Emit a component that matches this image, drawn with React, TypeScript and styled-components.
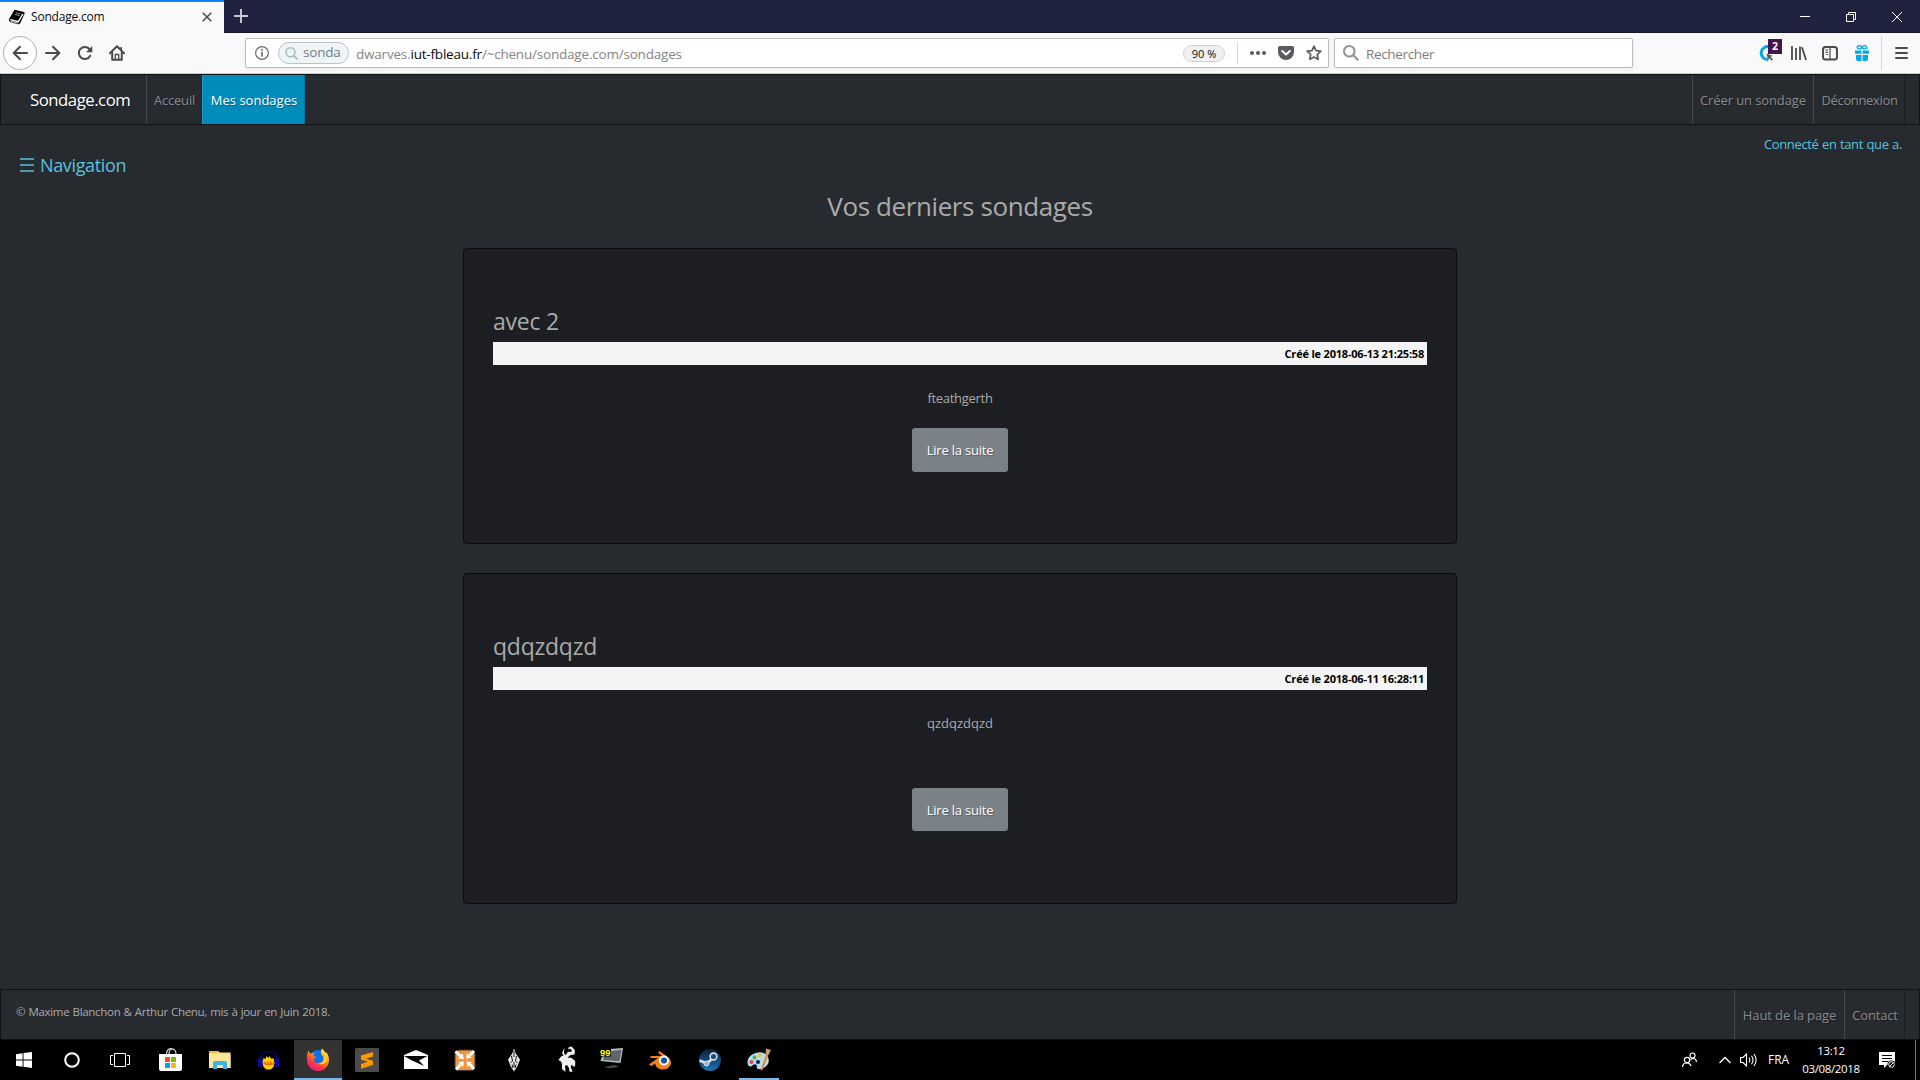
import React from "react";
import styled, { createGlobalStyle, css } from "styled-components";

const Global = createGlobalStyle`
  * { box-sizing: border-box; }
  html, body { margin: 0; padding: 0; background: #272b30; overflow: hidden; }
  svg { display: block; flex: none; }
`;

const Screen = styled.div`
  width: 1920px;
  height: 1080px;
  display: flex;
  flex-direction: column;
  font-family: "Open Sans", "Noto Sans", sans-serif;
  color: #aaa;
  white-space: nowrap;
  overflow: hidden;
`;

/* ---------- Browser window ---------- */

const TitleBar = styled.header`
  height: 33px;
  flex: none;
  display: flex;
  background: #20233f;
  box-shadow: inset 0 -1px 0 #13152a;
`;

const Tab = styled.div`
  width: 224px;
  height: 33px;
  display: flex;
  align-items: center;
  padding: 0 12px 1px 8px;
  border-top: 2px solid #0a84ff;
  background: #f9f9f9;
  color: #0c0c0d;
`;

const TabTitle = styled.span`
  flex: 1;
  margin: 0 0 1px 6px;
  font-size: 12px;
  line-height: 29px;
  letter-spacing: -0.2px;
`;

const NewTab = styled.div`
  display: flex;
  padding: 9px 0 0 10px;
`;

const WindowControls = styled.div`
  display: flex;
  gap: 36px;
  margin-left: auto;
  padding: 12px 18px 0 0;
`;

const Toolbar = styled.div`
  height: 41px;
  flex: none;
  display: flex;
  align-items: center;
  padding-left: 3px;
  background: #f9f9f9;
  border-bottom: 1px solid #ccc;
`;

const BackButton = styled.div`
  width: 34px;
  height: 34px;
  display: flex;
  align-items: center;
  justify-content: center;
  border: 1px solid #b1b1b1;
  border-radius: 50%;
  background: #fdfdfd;
`;

const ToolButtons = styled.div`
  display: flex;
  gap: 16px;
  margin-left: 8px;
`;

const Field = styled.div<{ $width: number }>`
  width: ${(p) => p.$width}px;
  height: 30px;
  display: flex;
  align-items: center;
  border: 1px solid #bcbcbc;
  border-radius: 2px;
  background: #fff;
  box-shadow: 0 1px 4px rgba(0, 0, 0, 0.06);
`;

const UrlField = styled(Field)`
  margin-left: 120px;
  padding: 0 6px 0 9px;
`;

const SearchField = styled(Field)`
  margin-left: 5px;
  padding-left: 8px;
`;

const SearchPill = styled.div`
  width: 71px;
  height: 22px;
  display: flex;
  align-items: center;
  gap: 5px;
  margin-left: 9px;
  padding-left: 6px;
  border: 1px solid #b8c6cc;
  border-radius: 11px;
  background: #f0f4f6;
  color: #6d7f87;
`;

const PillText = styled.span`
  margin-bottom: 2px;
  font-size: 13.5px;
  line-height: 18px;
  letter-spacing: -0.2px;
`;

const Url = styled.span`
  flex: 1;
  margin: 2px 0 0 7px;
  font-size: 13.5px;
  line-height: 20px;
  letter-spacing: -0.2px;
  color: #858585;
`;

const Host = styled.span`
  color: #0c0c0d;
`;

const ZoomPill = styled.div`
  width: 42px;
  height: 17px;
  border: 1px solid #d0d0d0;
  border-radius: 9px;
  background: #f0f0f0;
  color: #0c0c0d;
  font-size: 11px;
  line-height: 16px;
  text-align: center;
`;

const Rule = styled.i<{ $height: number; $before: number; $after?: number }>`
  width: 1px;
  height: ${(p) => p.$height}px;
  margin: 0 ${(p) => p.$after ?? 0}px 0 ${(p) => p.$before}px;
  background: #d7d7db;
`;

const UrlActions = styled.div`
  display: flex;
  gap: 12px;
  margin-left: 12px;
`;

const Placeholder = styled.span`
  margin: 2px 0 0 7px;
  font-size: 13.5px;
  line-height: 20px;
  letter-spacing: -0.35px;
  color: #7c7c7c;
`;

const Extensions = styled.div`
  display: flex;
  align-items: center;
  margin-left: auto;
  padding-right: 12px;
`;

const Counter = styled.div`
  position: relative;
  width: 24px;
  height: 16px;
  margin-right: 9px;
`;

const CounterBadge = styled.b`
  position: absolute;
  left: 10px;
  top: -6px;
  width: 14px;
  height: 15px;
  background: #45134d;
  color: #fff;
  font-size: 10.5px;
  line-height: 15px;
  text-align: center;
`;

/* ---------- Web page ---------- */

const bar = css`
  flex: none;
  display: flex;
  border: 1px solid #111314;
  background: #272b30;
`;

const NavBar = styled.nav`
  ${bar}
  height: 51px;
`;

const Brand = styled.a`
  width: 145px;
  padding-left: 29px;
  font-size: 16.8px;
  line-height: 49px;
  letter-spacing: -0.5px;
  color: #fff;
  text-shadow: 1px 1px 1px rgba(0, 0, 0, 0.3);
`;

const BarItem = styled.a<{ $width: number; $active?: boolean; $tracking?: number }>`
  width: ${(p) => p.$width}px;
  border-left: 1px solid #44484c;
  font-size: 13px;
  line-height: 51px;
  letter-spacing: ${(p) => p.$tracking ?? 0}px;
  text-align: center;
  color: #898b8d;
  text-shadow: 1px 1px 1px rgba(0, 0, 0, 0.3);
  ${(p) =>
    p.$active &&
    css`
      padding-left: 1px;
      border-left-color: #1a9bc6;
      border-right: 1px solid #0077a0;
      background: #008cba;
      color: #fff;
    `}
`;

const BarEnd = styled.div`
  display: flex;
  margin-left: auto;
  padding-right: 14px;
  box-shadow: inset -14px 0 0 #272b30, inset -15px 0 0 #1c1f23;
`;

const Main = styled.main`
  flex: 1;
  display: flex;
  flex-direction: column;
  align-items: center;
`;

const Account = styled.div`
  align-self: flex-end;
  padding: 9px 18px 0 0;
  font-size: 13px;
  line-height: 20px;
  letter-spacing: -0.35px;
  word-spacing: 0.4px;
  color: #5bc0de;
`;

const MenuToggle = styled.div`
  align-self: flex-start;
  display: flex;
  align-items: center;
  gap: 6px;
  padding: 0 0 0 20px;
  font-size: 18px;
  line-height: 22px;
  letter-spacing: -0.35px;
  color: #5bc0de;
`;

const Heading = styled.h1`
  margin: 12px 0 24px;
  font-size: 26px;
  font-weight: 400;
  line-height: 36px;
  letter-spacing: -0.4px;
`;

const Card = styled.article<{ $height: number }>`
  width: 994px;
  height: ${(p) => p.$height}px;
  display: flex;
  flex-direction: column;
  align-items: center;
  margin-bottom: 29px;
  padding: 56px 29px 0;
  border: 1px solid #0b0c0e;
  border-radius: 4px;
  background: #1c1e22;
`;

const CardTitle = styled.h2`
  align-self: stretch;
  margin: 0 0 5px;
  font-size: 23px;
  font-weight: 400;
  line-height: 32px;
  letter-spacing: -0.25px;
`;

const Created = styled.div`
  align-self: stretch;
  height: 23px;
  padding-right: 3px;
  background: #f4f4f4;
  color: #000;
  font-size: 11px;
  font-weight: 700;
  line-height: 24px;
  letter-spacing: -0.2px;
  text-align: right;
`;

const Description = styled.p<{ $gap: number; $tracking: number }>`
  margin: 23px 0 ${(p) => p.$gap}px;
  font-size: 13px;
  line-height: 20px;
  letter-spacing: ${(p) => p.$tracking}px;
`;

const ReadMore = styled.button<{ $height: number }>`
  width: 96px;
  height: ${(p) => p.$height}px;
  padding: 0;
  border: 0;
  border-radius: 3px;
  background: #7a8288;
  color: #fff;
  font: 13px/44px "Open Sans", "Noto Sans", sans-serif;
  letter-spacing: -0.2px;
  text-shadow: 1px 1px 1px rgba(0, 0, 0, 0.3);
`;

const Footer = styled.footer`
  ${bar}
  height: 51px;
`;

const Copyright = styled.small`
  padding: 12px 0 0 15px;
  font-size: 11.5px;
  line-height: 20px;
  letter-spacing: -0.3px;
  word-spacing: 0.45px;
`;

/* ---------- Desktop taskbar ---------- */

const Taskbar = styled.div`
  height: 40px;
  flex: none;
  display: flex;
  background: #000;
  color: #fff;
`;

const AppRow = styled.div`
  display: flex;
  gap: 1px;
  margin-left: 3px;
`;

const Task = styled.div<{ $focused?: boolean; $open?: boolean }>`
  width: 48px;
  height: 40px;
  background: ${(p) => (p.$focused ? "#333" : "none")};
  box-shadow: ${(p) => (p.$focused ? "inset 0 -2px 0 #76b9ed" : "none")};
  ${(p) =>
    p.$open &&
    css`
      background: linear-gradient(#76b9ed, #76b9ed) center bottom / 40px 2px no-repeat;
    `}
`;

const Tray = styled.div`
  display: flex;
  align-items: center;
  margin-left: auto;
`;

const Language = styled.span`
  width: 21px;
  margin: 0 12px 0 10px;
  font-size: 12px;
  line-height: 40px;
`;

const Clock = styled.div`
  width: 60px;
  margin-right: 18px;
  font-size: 11.5px;
  line-height: 18px;
  letter-spacing: -0.35px;
  text-align: center;
`;

const ShowDesktop = styled.i`
  width: 5px;
  height: 40px;
  margin-left: 19px;
  border-left: 1px solid #777;
`;

const g = "#4a4a4f";

const Pic = ({ w = 16, h = 16, vb, children }: { w?: number; h?: number; vb?: string; children: React.ReactNode }) => (
  <svg width={w} height={h} viewBox={vb ?? `0 0 ${w} ${h}`} fill="none">
    {children}
  </svg>
);

const AppIcon = ({ children }: { children: React.ReactNode }) => (
  <Pic w={48} h={40}>
    {children}
  </Pic>
);

const Book = () => (
  <Pic w={17} h={16}>
    <path d="M6.5 .8 16 3Q17 3.500 16.600 4.600L12.200 14.300Q11.500 15.600 10 15.200L2.200 13Q.2 12 1.100 10Z" fill="#000" />
    <path d="M2.300 10.600 10.300 12.700 14.900 4.800" stroke="#fff" strokeWidth="1.300" />
    <path d="M2.600 12.200l7.700 2" stroke="#fff" strokeWidth=".8" />
    <path d="M7.800 3.800l4.600 1.100M7 5.500l4.600 1.100" stroke="#bbb" strokeWidth=".8" />
  </Pic>
);

function BrowserChrome() {
  return (
    <>
      <TitleBar>
        <Tab>
          <Book />
          <TabTitle>Sondage.com</TabTitle>
          <Pic w={10} h={10}><path d="M.7.7l8.6 8.6M9.3.7.7 9.3" stroke={g} strokeWidth="1.5" /></Pic>
        </Tab>
        <NewTab><Pic w={14} h={14}><path d="M7 0v14M0 7h14" stroke="#c5c5d2" strokeWidth="2" /></Pic></NewTab>
        <WindowControls>
          <Pic w={10} h={10}><path d="M0 4.5h10" stroke="#fff" /></Pic>
          <Pic w={10} h={10}><path d="M.5 2.5h7v7h-7zM2.5 2.5v-2h7v7h-2" stroke="#fff" /></Pic>
          <Pic w={10} h={10}><path d="M0 0l10 10M10 0 0 10" stroke="#fff" /></Pic>
        </WindowControls>
      </TitleBar>
      <Toolbar>
        <BackButton>
          <Pic><path d="M15 8H2M8 1.7 1.7 8 8 14.3" stroke={g} strokeWidth="2" strokeLinecap="round" strokeLinejoin="round" /></Pic>
        </BackButton>
        <ToolButtons>
          <Pic><path d="M1 8h13M8 1.7 14.3 8 8 14.3" stroke={g} strokeWidth="2" strokeLinecap="round" strokeLinejoin="round" /></Pic>
          <Pic>
            <path d="M13.2 10.7A6 6 0 1 1 12.4 4" stroke={g} strokeWidth="2" strokeLinecap="round" />
            <path d="M15.3 1v6.3H9z" fill={g} />
          </Pic>
          <Pic>
            <path d="M1 8.2 8 1.3l7 6.9" stroke={g} strokeWidth="2" strokeLinecap="round" strokeLinejoin="round" />
            <path d="M3.2 7v7.8h9.6V7" stroke={g} strokeWidth="2" strokeLinejoin="round" />
            <path d="M6.3 15V9.5h3.4V15" stroke={g} strokeWidth="1.3" /><path d="M12.2 2v3" stroke={g} strokeWidth="1.6" />
          </Pic>
        </ToolButtons>
        <UrlField $width={1084}>
          <Pic w={14} h={14}>
            <circle cx="7" cy="7" r="6.4" stroke="#6b6b6f" strokeWidth="1.2" />
            <path d="M7 6v4.6M7 3.2v1.7" stroke="#6b6b6f" strokeWidth="1.7" />
          </Pic>
          <SearchPill>
            <Pic w={13} h={13}><circle cx="5.5" cy="5.3" r="4.5" stroke="#a9bbc2" strokeWidth="1.6" /><path d="M8.7 8.7l3.6 3.6" stroke="#a9bbc2" strokeWidth="1.8" /></Pic>
            <PillText>sonda</PillText>
          </SearchPill>
          <Url>dwarves.<Host>iut-fbleau.fr</Host>/~chenu/sondage.com/sondages</Url>
          <ZoomPill>90 %</ZoomPill>
          <Rule $height={22} $before={12} />
          <UrlActions>
            <Pic><g fill="#5c5c60"><circle cx="2" cy="8" r="2" /><circle cx="8" cy="8" r="2" /><circle cx="14" cy="8" r="2" /></g></Pic>
            <Pic>
              <path d="M1.5 1h13Q16 1 16 2.5V7A8 8 0 0 1 0 7V2.5Q0 1 1.5 1z" fill="#5c5c60" />
              <path d="M4.2 6 8 9.6 11.8 6" stroke="#fff" strokeWidth="2" strokeLinecap="round" strokeLinejoin="round" />
            </Pic>
            <Pic><path d="M8 1.2 10 5.6l4.8.6-3.5 3.3.9 4.8L8 12l-4.2 2.3.9-4.8L1.2 6.2 6 5.6z" stroke="#5c5c60" strokeWidth="1.7" strokeLinejoin="round" /></Pic>
          </UrlActions>
        </UrlField>
        <SearchField $width={299}>
          <Pic><circle cx="6.3" cy="6.3" r="5.3" stroke="#949494" strokeWidth="2" /><path d="M10.3 10.3l5 5" stroke="#949494" strokeWidth="2.2" /></Pic>
          <Placeholder>Rechercher</Placeholder>
        </SearchField>
        <Extensions>
          <Counter>
            <Pic>
              <path d="M11.5 1.9A6.4 6.4 0 1 0 10 14.4" stroke="#00a9ee" strokeWidth="3" />
              <path d="M8.500 8.500l6.500 2.500-2.700.8 2.700 2.700-1.200 1.200-2.700-2.700-.9 2.500z" fill="#55565a" />
            </Pic>
            <CounterBadge>2</CounterBadge>
          </Counter>
          <Pic><path d="M1 1v14M5 3v12M9 1.5V15" stroke={g} strokeWidth="1.8" /><path d="M11 2.2 15 15" stroke={g} strokeWidth="1.8" /></Pic>
          <Pic w={31} h={16} vb="-15 0 31 16">
            <rect x="1" y="2" width="14" height="12.5" rx="2.5" stroke={g} strokeWidth="2" />
            <path d="M8 2v12" stroke={g} strokeWidth="1.2" /><path d="M3.2 5h3M3.2 7.3h3M4.2 9.6h2" stroke={g} />
          </Pic>
          <Pic w={32} h={16} vb="-17 0 32 16">
            <path d="M0 5.5h6.4v3.3H0zM7.6 5.5H14v3.3H7.6zM1 10h5.4v6H3q-2 0-2-2zM7.6 10H13v4q0 2-2 2H7.6z" fill="#00a9ee" />
            <ellipse cx="4.4" cy="2.2" rx="2.2" ry="1.6" stroke="#00a9ee" strokeWidth="1.3" /><ellipse cx="9.6" cy="2.2" rx="2.2" ry="1.6" stroke="#00a9ee" strokeWidth="1.3" />
          </Pic>
          <Rule $height={34} $before={11} $after={13} />
          <Pic w={13} h={16}><path d="M1 3h11M1 8h11M1 13h11" stroke={g} strokeWidth="2" strokeLinecap="round" /></Pic>
        </Extensions>
      </Toolbar>
    </>
  );
}

const polls = [
  { title: "avec 2", date: "2018-06-13 21:25:58", text: "fteathgerth", tracking: -0.3, height: 296, gap: 20, button: 44 },
  { title: "qdqzdqzd", date: "2018-06-11 16:28:11", text: "qzdqzdqzd", tracking: 0, height: 331, gap: 55, button: 43 },
];

function PollPage() {
  return (
    <>
      <NavBar>
        <Brand>Sondage.com</Brand>
        <BarItem $width={56} $tracking={-0.2}>Acceuil</BarItem>
        <BarItem $width={103} $active>Mes sondages</BarItem>
        <BarEnd>
          <BarItem $width={121} $tracking={-0.1}>Créer un sondage</BarItem>
          <BarItem $width={92} $tracking={-0.35}>Déconnexion</BarItem>
        </BarEnd>
      </NavBar>
      <Main>
        <Account>Connecté en tant que a.</Account>
        <MenuToggle>
          <Pic w={14} h={14}><path d="M0 1h14M0 7h14M0 13h14" stroke="#5bc0de" strokeWidth="1.5" /></Pic>
          Navigation
        </MenuToggle>
        <Heading>Vos derniers sondages</Heading>
        {polls.map((p) => (
          <Card key={p.title} $height={p.height}>
            <CardTitle>{p.title}</CardTitle>
            <Created>{`Créé le ${p.date}`}</Created>
            <Description $gap={p.gap} $tracking={p.tracking}>{p.text}</Description>
            <ReadMore $height={p.button}>Lire la suite</ReadMore>
          </Card>
        ))}
      </Main>
      <Footer>
        <Copyright>© Maxime Blanchon & Arthur Chenu, mis à jour en Juin 2018.</Copyright>
        <BarEnd>
          <BarItem $width={110} $tracking={-0.1}>Haut de la page</BarItem>
          <BarItem $width={61} $tracking={-0.2}>Contact</BarItem>
        </BarEnd>
      </Footer>
    </>
  );
}

function DesktopBar() {
  return (
    <Taskbar>
      <Task>
        <AppIcon><path d="M16 14.2 22.6 13.3v6.2H16zM23.5 13.1 32 12v7.5h-8.5zM16 20.4h6.6v6.3L16 25.8zM23.5 20.4H32V28l-8.5-1.2z" fill="#fff" /></AppIcon>
      </Task>
      <Task>
        <AppIcon><circle cx="24" cy="20" r="6.8" stroke="#fff" strokeWidth="2" /></AppIcon>
      </Task>
      <Task>
        <AppIcon><path d="M18.5 13.5h11v13h-11zM17 15.5h-2.5v9H17M31 15.5h2.500v9H31" stroke="#fff" /></AppIcon>
      </Task>
      <AppRow>
        <Task>
          <AppIcon>
            <path d="M12 14h23v15q0 2-2 2H14q-2 0-2-2z" fill="#fff" />
            <path d="M19.500 14q0-5 4.500-5.500 5 .5 5 5.500M22 14q0-5 3.500-5" stroke="#ddd" strokeWidth="1.200" />
            <path d="M18 17h5v5h-5z" fill="#f25022" /><path d="M24 17h5v5h-5z" fill="#7fba00" />
            <path d="M18 23h5v5h-5z" fill="#00a4ef" /><path d="M24 23h5v5h-5z" fill="#ffb900" />
          </AppIcon>
        </Task>
        <Task>
          <AppIcon>
            <path d="M13 11h9l2 1.500h10.500V28H13z" fill="#ffe08a" />
            <path d="M13 11h9v2h-9z" fill="#f5b93a" /><path d="M13 14h21.500v14H13z" fill="#ffe79a" />
            <path d="M17 29v-6q0-2 2-2h10q2 0 2 2v6h-4v-4h-6v4z" fill="#3bb4ea" />
          </AppIcon>
        </Task>
        <Task>
          <AppIcon>
            <path d="M15.500 20Q15.500 11.500 24 11.500T32.500 20" stroke="#00007e" strokeWidth="1.500" />
            <ellipse cx="15.500" cy="22.500" rx="2.600" ry="5" fill="#0a0aa8" /><ellipse cx="32" cy="22.500" rx="2.600" ry="5" fill="#0a0aa8" />
            <path d="M17.500 22l1-4 2 1 1-3 2 2 1-2 2 3 2-1 1 5-1 4-3 2.500h-4l-3-2.500z" fill="#ffcf00" />
            <path d="M18 23l2-2 1 3 2-4 1 4 2-4 1 4 2-3 .5 3-2 1h-7z" fill="#f26a00" />
          </AppIcon>
        </Task>
        <Task $focused>
          <AppIcon>
            <defs>
              <linearGradient id="fox" x1=".85" y1="0" x2=".2" y2="1">
                <stop offset="0" stopColor="#fff44f" /><stop offset=".4" stopColor="#ff980e" />
                <stop offset=".7" stopColor="#ff3647" /><stop offset="1" stopColor="#e31587" />
              </linearGradient>
            </defs>
            <circle cx="24" cy="18" r="8" fill="#0a6fe8" />
            <path d="M14.500 10.500q.5 2 2.500 3 2-1 4-.5-2 1-1.500 3l3 1-2.500 2q0 4 4 4 3 0 5-2.500 1-4-2-6.500-1-3 1-5.500 2 1.500 3.500 4.500l.5-1q3 3 3 8a11 11 0 0 1-22 0Q12.500 14 14.500 10.500z" fill="url(#fox)" />
            <path d="M28 8.500q4 5 3 10-2 6-8 5 6 2.500 9-2.500 2-6-4-12.500z" fill="#ffe03a" />
          </AppIcon>
        </Task>
        <Task>
          <AppIcon>
            <rect x="12" y="8" width="24" height="24" rx="1.500" fill="#4b4b4b" />
            <path d="M18 15.500 30 12v4.500l-7 2.200 7 2V25l-12 3.700V24l7-2.200-7-2z" fill="#ff9800" />
          </AppIcon>
        </Task>
        <Task>
          <AppIcon><path d="M12 15 24 10l12 5v14H12z" fill="#fff" /><path d="M12 16h23.500L27 20.500l5 5.500-13-6z" fill="#000" /></AppIcon>
        </Task>
        <Task>
          <AppIcon>
            <rect x="14" y="10" width="20" height="20.500" rx="4" fill="#f0953f" stroke="#3c3c3c" />
            <path d="M14.500 11.500l5 4.500M33 11l-4.500 4.500M15 29.500l4.500-5M33 29l-4.500-5" stroke="#fff" strokeWidth="3" />
            <path d="M22.800 19.200l-6-1 5-4.700zM25.300 18.800l.4-5.500 5 4.400zM22.800 21.500l-.6 5.500-5-4.700zM25.500 21.500l5.500.5-4.700 5z" fill="#fff" />
          </AppIcon>
        </Task>
        <Task>
          <AppIcon>
            <path d="M24 8.500 26 14l4 5.500L27.500 26 24 31.500 20.500 26 18 19.500 22 14z" fill="#e8e8e8" />
            <path d="M24 11v6M21.500 16l1 5-2 2M26.500 16l-1 5 2 2M24 22v5M22 24.500l1 3.500M26 24.500l-1 3.500" stroke="#111" />
          </AppIcon>
        </Task>
        <Task>
          <AppIcon>
            <path d="M25.500 7.800 23 13l1.500 2.500-2.500 1-2.600 3.500L22 21.500 23 24v5l3.500 3-.5-6 2-1 2 3 .5 3.700h3.200l-2-4.700.8-2 3 2 .7-2v-4l-3.500-3-4.200-.5 3-2.500 4-.5.500-4-3-3.700h-3l-1 2.700 2-.7 2 1.500-1 1.700-3-.2-2 3-1.500-.5-.5-2z" fill="#eee" />
          </AppIcon>
        </Task>
        <Task>
          <AppIcon>
            <path d="M22 9 35 8l-2.500 15-20-2 2-6h8z" fill="#b8bec2" /><path d="M23 11l10.500-1.300-2 11.500L15 20l1-4h7z" fill="#5e656c" />
            <path d="M16 27q8 3 15-1l-5-1z" fill="#444" />
            <path d="M12 9h11v7.500H12z" fill="#000" />
            <text x="12" y="16" fontFamily="Liberation Sans, sans-serif" fontWeight="700" fontSize="9.5" letterSpacing="0" fill="#ff0">99</text>
          </AppIcon>
        </Task>
        <Task>
          <AppIcon>
            <path d="M12 24.500 21 18h-7.500v-2H25l-4-3.500 1.500-1.500 9.500 7q3.500 4 1 8-3 4-8.500 3.500-5.500-1-6.500-6l-3.500 2.500z" fill="#f5811f" />
            <circle cx="27" cy="20.500" r="5" fill="#fff" /><circle cx="27" cy="20.500" r="3.100" fill="#13579c" />
          </AppIcon>
        </Task>
        <Task>
          <AppIcon>
            <defs><linearGradient id="steam" x1="0" y1="0" x2="0" y2="1"><stop offset="0" stopColor="#0b1c40" /><stop offset="1" stopColor="#1a76b4" /></linearGradient></defs>
            <circle cx="24" cy="20" r="11" fill="url(#steam)" />
            <path d="M13.500 20.500 20 23l4-2 3-4" stroke="#d5dfe8" strokeWidth="2.600" />
            <circle cx="27.500" cy="16.500" r="3.400" fill="#234a77" stroke="#d5dfe8" strokeWidth="1.600" />
            <circle cx="20.500" cy="23.500" r="2.500" fill="#9db7cf" stroke="#d5dfe8" />
          </AppIcon>
        </Task>
        <Task $open>
          <AppIcon>
            <path d="M13 25q-2-7 5-11 8-4 14 1 3 4 1 9-4 6-10 5-2-1-1-3-1-3-4-1-3 3-5 0z" fill="#b5ddf0" />
            <circle cx="16.500" cy="22" r="2" fill="#d9434b" /><circle cx="19.500" cy="17.500" r="2" fill="#52b450" /><circle cx="25" cy="15.500" r="2" fill="#f0c030" />
            <circle cx="23" cy="22" r="2" fill="#123" />
            <path d="M32 12 25.500 31l2-1L34 13z" fill="#e8812a" /><path d="M31 8.500l5 1.500-2.500 5-3-1z" fill="#c79b6b" />
          </AppIcon>
        </Task>
      </AppRow>
      <Tray>
        <Pic w={15} h={16}>
          <circle cx="5" cy="8" r="2.700" stroke="#fff" strokeWidth="1.200" /><circle cx="10.500" cy="3.500" r="2.500" stroke="#fff" strokeWidth="1.200" />
          <path d="M.6 15q0-4 4.400-4 3 0 4 3M8.500 8Q11 5.500 13 7q1.500 1 1.400 3" stroke="#fff" strokeWidth="1.200" />
        </Pic>
        <Pic w={34} h={14} vb="-22 0 34 14"><path d="M.5 10 6 4.500l5.500 5.500" stroke="#fff" strokeWidth="1.300" /></Pic>
        <Pic w={27} h={16} vb="-9 0 27 16">
          <path d="M.6 5.500H3l3.500-3.500v12L3 10.500H.6z" stroke="#fff" strokeWidth="1.100" />
          <path d="M9 5.500q1.800 2.500 0 5M11.500 3.700q3 4.300 0 8.600M14 2q4.200 6 0 12" stroke="#fff" strokeWidth="1.100" />
        </Pic>
        <Language>FRA</Language>
        <Clock>13:12<br />03/08/2018</Clock>
        <Pic w={17} h={17}>
          <path d="M0 0h16v13H8l-3 3v-3H0z" fill="#fff" /><path d="M3 3.500h10M3 6.500h10M3 9.500h6" stroke="#000" />
          <circle cx="12.500" cy="12.500" r="4" fill="#000" /><circle cx="12.500" cy="12.500" r="2.800" stroke="#fff" /><path d="M10.500 14.500l4-4" stroke="#fff" />
        </Pic>
        <ShowDesktop />
      </Tray>
    </Taskbar>
  );
}

export default function App() {
  return (
    <Screen>
      <Global />
      <BrowserChrome />
      <PollPage />
      <DesktopBar />
    </Screen>
  );
}
